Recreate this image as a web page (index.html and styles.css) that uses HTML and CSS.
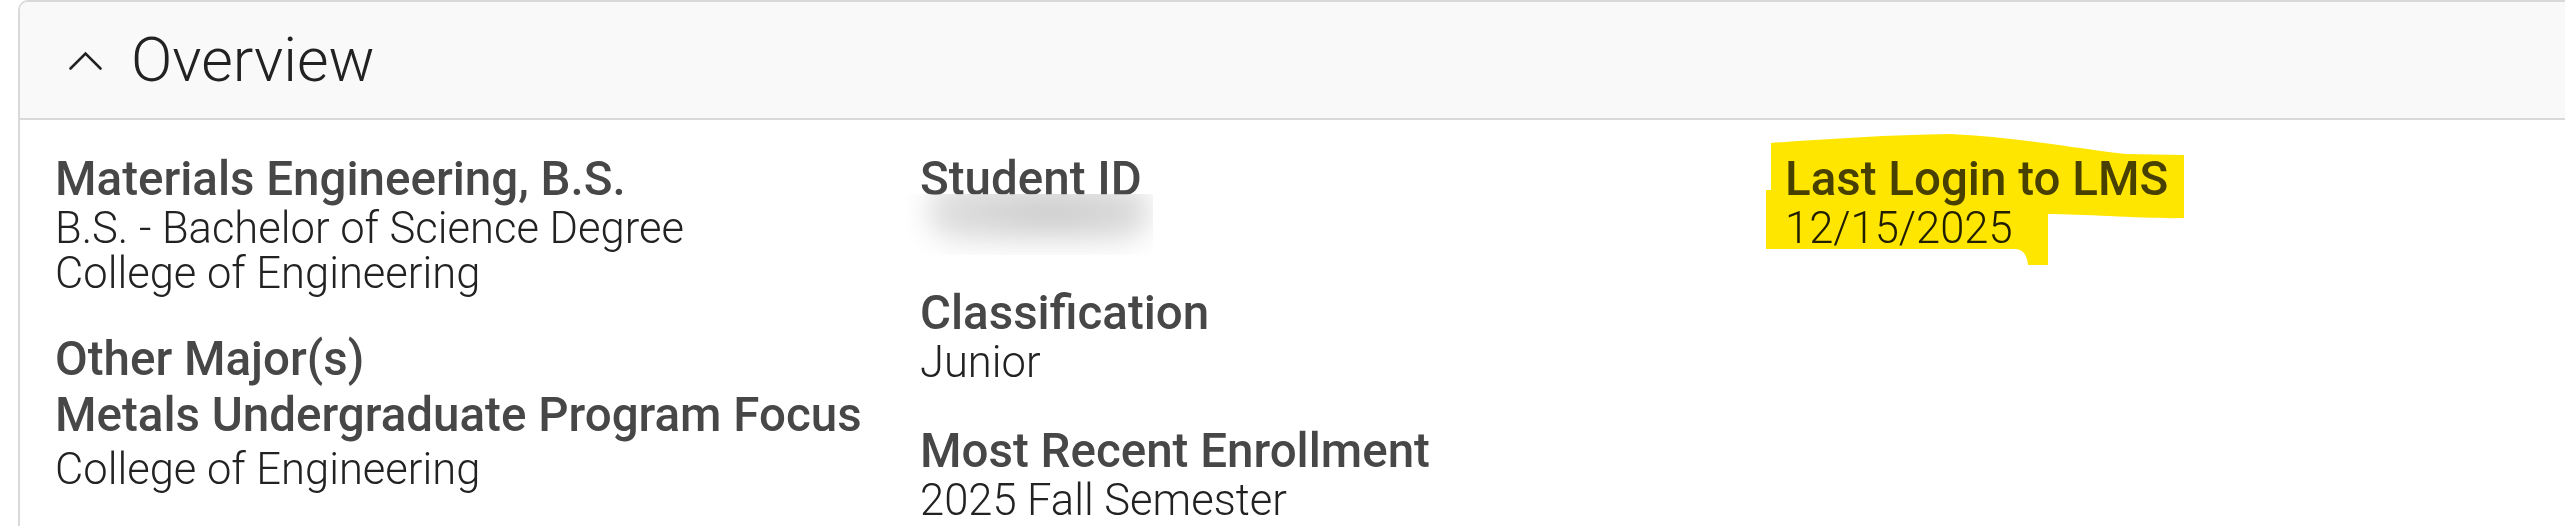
FILE: index.html
```html
<!DOCTYPE html>
<html lang="en">
<head>
<meta charset="utf-8">
<title>Overview</title>
<link rel="stylesheet" href="styles.css">
</head>
<body>
<section class="panel">
  <header class="panel-header">
    <svg class="chevron" width="36" height="20" viewBox="0 0 36 20" aria-hidden="true">
      <polyline points="2.5,17.5 17.5,2.5 32.5,17.5" fill="none" stroke="#222" stroke-width="2.6" stroke-linecap="round" stroke-linejoin="miter"/>
    </svg>
    <h2 class="panel-title">Overview</h2>
  </header>
  <div class="panel-body">
    <div class="col col-program">
      <div class="item">
        <div class="label">Materials Engineering, B.S.</div>
        <div class="value">B.S. - Bachelor of Science Degree</div>
        <div class="value">College of Engineering</div>
      </div>
      <div class="item">
        <div class="label">Other Major(s)</div>
        <div class="sub">
          <div class="label">Metals Undergraduate Program Focus</div>
          <div class="value">College of Engineering</div>
        </div>
      </div>
    </div>
    <div class="col">
      <div class="item">
        <div class="label">Student ID</div>
        <div class="value redacted"><span class="smudge"></span></div>
      </div>
      <div class="item">
        <div class="label">Classification</div>
        <div class="value">Junior</div>
      </div>
      <div class="item">
        <div class="label">Most Recent Enrollment</div>
        <div class="value">2025 Fall Semester</div>
      </div>
    </div>
    <div class="col">
      <div class="item marked">
        <div class="label">Last Login to LMS</div>
        <div class="value">12/15/2025</div>
        <svg class="marker" width="420" height="132" viewBox="0 0 420 132" aria-hidden="true">
          <path d="M5,9 C60,5 120,1 184,0 C250,3 320,16 360,20 L418,21 L418,84 C380,85 320,80 282,80 L282,131 L262,131 C261,122 258,116 250,115 L0,115 L0,56 L5,56 Z" fill="#ffe600"/>
        </svg>
      </div>
    </div>
  </div>
</section>
</body>
</html>
```

FILE: styles.css
```css
html, body {
  margin: 0;
  padding: 0;
  background: #ffffff;
}

body {
  font-family: Roboto, "Liberation Sans", Arial, sans-serif;
  color: #222222;
  height: 100vh;
  overflow: hidden;
}

.panel {
  box-sizing: border-box;
  margin-left: 18px;
  margin-right: -40px;
  min-height: 100vh;
  border: 2px solid #d9d9d9;
  border-bottom: none;
  border-radius: 10px 10px 0 0;
}

.panel-header {
  display: flex;
  align-items: center;
  height: 116px;
  padding-left: 48px;
  background: #f9f9f9;
  border-bottom: 2px solid #d9d9d9;
  border-radius: 8px 8px 0 0;
}

.chevron {
  display: block;
  margin-right: 27px;
  margin-top: 2px;
}

.panel-title {
  margin: 0;
  font-size: 61px;
  font-weight: 300;
  color: #222222;
  line-height: 1;
}

.panel-body {
  display: grid;
  grid-template-columns: 865px 865px 865px;
  padding: 33px 0 0 35px;
}

.col {
  display: flex;
  flex-direction: column;
  gap: 40px;
}

.col-program {
  gap: 37px;
}

.label {
  font-size: 47.5px;
  font-weight: 500;
  line-height: 53px;
  color: #474747;
}

.value {
  font-size: 43.5px;
  font-weight: 300;
  line-height: 45px;
  color: #222222;
}

/* nested major entry under "Other Major(s)" */
.sub {
  margin-top: 3px;
}

.sub .label {
  margin-bottom: 5px;
}

.redacted {
  position: relative;
  height: 61px;
  width: 246px;
  margin-left: -13px;
  margin-top: -12px;
  margin-bottom: -8px;
  overflow: hidden;
}

.smudge {
  position: absolute;
  left: 20px;
  top: -12px;
  width: 224px;
  height: 58px;
  border-radius: 30px;
  background: radial-gradient(ellipse at 55% 55%, #cbcbcb 0%, #d8d8d8 45%, #e8e8e8 100%);
  filter: blur(14px);
}

.marked {
  position: relative;
}

.marker {
  position: absolute;
  left: -19px;
  top: -19px;
  mix-blend-mode: multiply;
  pointer-events: none;
}
```
